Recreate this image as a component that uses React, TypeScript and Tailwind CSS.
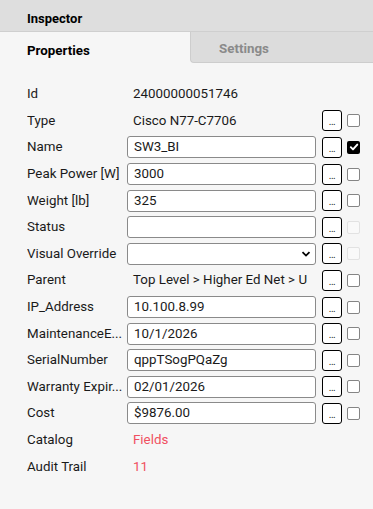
import React from "react";

type Row = {
  label: string;
  kind: "text" | "input" | "select" | "link";
  value?: string;
  btn?: boolean;
  check?: "on" | "off" | "disabled";
};

const rows: Row[] = [
  { label: "Id", kind: "text", value: "24000000051746" },
  { label: "Type", kind: "text", value: "Cisco N77-C7706", btn: true, check: "off" },
  { label: "Name", kind: "input", value: "SW3_BI", btn: true, check: "on" },
  { label: "Peak Power [W]", kind: "input", value: "3000", btn: true, check: "off" },
  { label: "Weight [lb]", kind: "input", value: "325", btn: true, check: "off" },
  { label: "Status", kind: "input", value: "", btn: true, check: "disabled" },
  { label: "Visual Override", kind: "select", value: "", btn: true, check: "disabled" },
  { label: "Parent", kind: "text", value: "Top Level > Higher Ed Net > U", btn: true, check: "off" },
  { label: "IP_Address", kind: "input", value: "10.100.8.99", btn: true, check: "off" },
  { label: "MaintenanceE...", kind: "input", value: "10/1/2026", btn: true, check: "off" },
  { label: "SerialNumber", kind: "input", value: "qppTSogPQaZg", btn: true, check: "off" },
  { label: "Warranty Expir...", kind: "input", value: "02/01/2026", btn: true, check: "off" },
  { label: "Cost", kind: "input", value: "$9876.00", btn: true, check: "off" },
  { label: "Catalog", kind: "link", value: "Fields" },
  { label: "Audit Trail", kind: "link", value: "11" },
];

function Check({ state }: { state: "on" | "off" | "disabled" }) {
  if (state === "on") {
    return (
      <div className="w-[13px] h-[13px] rounded-[2px] bg-black flex items-center justify-center">
        <svg width="10" height="10" viewBox="0 0 10 10">
          <path d="M1.8 5.2 L4 7.4 L8.3 2.6" stroke="white" strokeWidth="1.9" fill="none" strokeLinecap="round" strokeLinejoin="round" />
        </svg>
      </div>
    );
  }
  return (
    <div
      className={
        "w-[13px] h-[13px] rounded-[2px] border " +
        (state === "disabled" ? "border-[#e2e2e2] bg-[#f9f9f9]" : "border-[#858585] bg-white")
      }
    />
  );
}

function Dots() {
  return (
    <div className="w-[20px] h-[21px] rounded-[3px] border border-black bg-white flex items-end justify-center pb-[3px]">
      <span className="text-[10px] leading-[10px] text-[#222] tracking-[-0.5px]">...</span>
    </div>
  );
}

export default function App() {
  return (
    <div
      className="w-[373px] h-[509px] bg-[#f6f6f6] flex flex-col text-[13.33px] text-[#1a1a1a]"
      style={{ fontFamily: "Roboto, 'Liberation Sans', sans-serif" }}
    >
      <div className="h-[32px] bg-[#dedede] border-b border-[#cfcfcf] flex items-center pl-[27px] pt-[6px]">
        <span className="font-bold text-[13px] text-black">Inspector</span>
      </div>
      <div className="h-[31px] flex bg-[#f6f6f6]">
        <div className="w-[190px] bg-[#f6f6f6] rounded-tr-[4px] flex items-center pl-[27px] pt-[6px]">
          <span className="font-bold text-[13.33px] text-black">Properties</span>
        </div>
        <div className="flex-1 bg-[#dcdcdc] rounded-bl-[4px] border-l border-b border-[#cdcdcd] flex items-center pl-[28px] pt-[4px]">
          <span className="font-bold text-[13.33px] text-[#8a8a8a]">Settings</span>
        </div>
      </div>
      <div className="pt-[18px] flex flex-col">
        {rows.map((r, i) => (
          <div key={i} className="h-[26.6px] flex items-center pl-[27px]">
            <div className="w-[100px] whitespace-nowrap overflow-hidden">{r.label}</div>
            <div className="w-[189px] h-[22px] flex items-center overflow-hidden">
              {r.kind === "text" && (
                <div className="pl-[6px] whitespace-nowrap overflow-hidden w-full">{r.value}</div>
              )}
              {r.kind === "link" && (
                <div className="pl-[6px] text-[#f0505f]">{r.value}</div>
              )}
              {r.kind === "input" && (
                <div className="w-full h-[22px] bg-white border border-[#8a8a8a] rounded-[3px] flex items-center pl-[6px] whitespace-nowrap overflow-hidden">
                  {r.value}
                </div>
              )}
              {r.kind === "select" && (
                <div className="w-full h-[22px] bg-white border border-[#8a8a8a] rounded-[3px] flex items-center justify-end pr-[4px]">
                  <svg width="10" height="10" viewBox="0 0 10 10">
                    <path d="M1.5 3.2 L5 6.6 L8.5 3.2" stroke="black" strokeWidth="1.8" fill="none" />
                  </svg>
                </div>
              )}
            </div>
            {r.btn && (
              <div className="ml-[6px]">
                <Dots />
              </div>
            )}
            {r.check && (
              <div className="ml-[5px]">
                <Check state={r.check} />
              </div>
            )}
          </div>
        ))}
      </div>
    </div>
  );
}
